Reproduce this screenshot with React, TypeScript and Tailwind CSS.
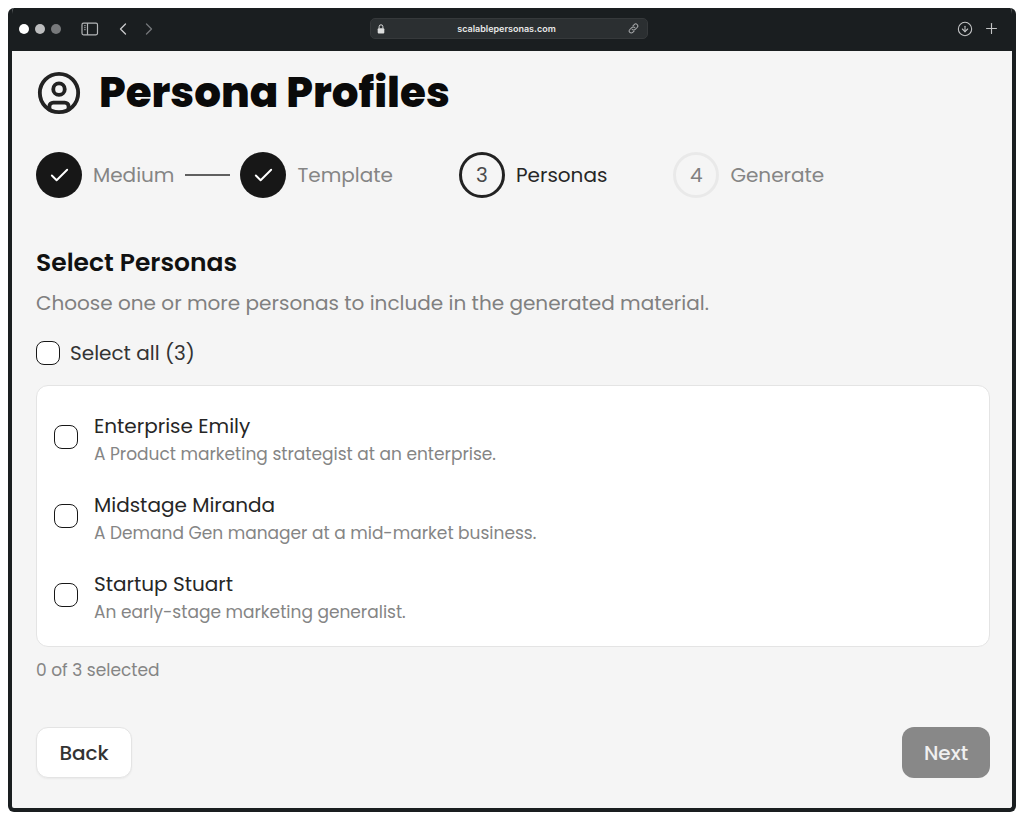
import { useState } from 'react';
import {
  Check,
  ChevronLeft,
  ChevronRight,
  CircleArrowDown,
  CircleUser,
  Plus,
} from 'lucide-react';
import clsx from 'clsx';

type StepState = 'done' | 'current' | 'upcoming';

const STEPS: { label: string; state: StepState }[] = [
  { label: 'Medium', state: 'done' },
  { label: 'Template', state: 'done' },
  { label: 'Personas', state: 'current' },
  { label: 'Generate', state: 'upcoming' },
];

const PERSONAS = [
  {
    id: 'emily',
    name: 'Enterprise Emily',
    description: 'A Product marketing strategist at an enterprise.',
  },
  {
    id: 'miranda',
    name: 'Midstage Miranda',
    description: 'A Demand Gen manager at a mid-market business.',
  },
  {
    id: 'stuart',
    name: 'Startup Stuart',
    description: 'An early-stage marketing generalist.',
  },
];

const CHECKBOX =
  'size-6 shrink-0 appearance-none rounded-lg border border-[#171717] bg-white checked:bg-[#171717]';

/* ── Browser chrome ─────────────────────────────────────── */

function SidebarIcon() {
  return (
    <svg width="18" height="14" viewBox="0 0 18 14" fill="none" stroke="#b4b6b8">
      <rect x="1" y="1.2" width="15.5" height="11.6" rx="1.5" strokeWidth="1.2" />
      <path d="M6.5 1.2v11.6" strokeWidth="1.2" />
      <path d="M3 3.7h1.8M3 5.7h1.8M3 7.7h1.8" strokeWidth="0.8" />
    </svg>
  );
}

function LockIcon() {
  return (
    <svg width="8" height="10" viewBox="0 0 8 10" fill="none">
      <rect x="0.7" y="4.2" width="6.6" height="5.4" rx="1" fill="#dcdddd" />
      <path d="M2.1 4.5V2.7a1.9 1.9 0 0 1 3.8 0v1.8" stroke="#dcdddd" strokeWidth="1" />
    </svg>
  );
}

function LinkIcon() {
  return (
    <svg
      width="11"
      height="11"
      viewBox="0 0 24 24"
      fill="none"
      stroke="#a4a6a8"
      strokeWidth="2.2"
      strokeLinecap="round"
    >
      <path d="M9 13.5a4.5 4.5 0 0 0 6.8.5l4.2-4.2a4.5 4.5 0 0 0-6.4-6.4L10.8 6.2" />
      <path d="M15 10.5a4.5 4.5 0 0 0-6.8-.5L4 14.2a4.5 4.5 0 0 0 6.4 6.4l2.8-2.8" />
    </svg>
  );
}

function BrowserBar() {
  return (
    <header className="grid h-[43px] grid-cols-[1fr_278px_1fr] items-center bg-[#1a1e20] pb-0.5 pl-1.5 pr-3">
      <div className="flex items-center pl-px">
        <div className="flex gap-1.5">
          <span className="size-2.5 rounded-full bg-white" />
          <span className="size-2.5 rounded-full bg-[#bcbdbe]" />
          <span className="size-2.5 rounded-full bg-[#77797b]" />
        </div>
        <button type="button" aria-label="Toggle sidebar" className="ml-5">
          <SidebarIcon />
        </button>
        <button type="button" aria-label="Go back" className="ml-3.5">
          <ChevronLeft size={20} strokeWidth={1.6} className="text-[#c8c9ca]" />
        </button>
        <button type="button" aria-label="Go forward" className="ml-1.5">
          <ChevronRight size={20} strokeWidth={1.6} className="text-[#737678]" />
        </button>
      </div>

      <div className="flex h-[21px] items-center justify-between rounded-[5px] border border-[#36393b] bg-[#2b2f31] pl-1.5 pr-2">
        <LockIcon />
        <a
          href="#"
          className="font-['Inter',sans-serif] text-[9px] font-semibold leading-4 text-[#e8e8e8]"
        >
          scalablepersonas.com
        </a>
        <LinkIcon />
      </div>

      <div className="flex items-center justify-end gap-2.5">
        <button type="button" aria-label="Downloads">
          <CircleArrowDown size={16} strokeWidth={1.6} className="text-[#c3c4c5]" />
        </button>
        <button type="button" aria-label="New tab">
          <Plus size={17} strokeWidth={1.6} className="text-[#c3c4c5]" />
        </button>
      </div>
    </header>
  );
}

/* ── Wizard steps ───────────────────────────────────────── */

function Stepper() {
  return (
    <ol className="mt-9 flex items-center gap-2.5">
      {STEPS.map((step, i) => (
        <li key={step.label} className="flex items-center gap-[11px]">
          <span
            className={clsx(
              'flex size-[46px] shrink-0 items-center justify-center rounded-full text-xl',
              step.state === 'done' && 'bg-[#171717] text-white',
              step.state === 'current' && 'border-[3px] border-[#222] text-[#4a4a4a]',
              step.state === 'upcoming' && 'border-[3px] border-[#e9e9e9] text-[#808080]',
            )}
          >
            {step.state === 'done' ? <Check size={23} strokeWidth={2} /> : i + 1}
          </span>
          <span
            className={clsx(
              'whitespace-nowrap text-xl leading-7',
              step.state === 'current' ? 'text-[#262626]' : 'text-[#858585]',
            )}
          >
            {step.label}
          </span>
          {i < STEPS.length - 1 && (
            <span className={clsx('h-0.5 w-[45px]', i === 0 && 'bg-[#606060]')} />
          )}
        </li>
      ))}
    </ol>
  );
}

export default function App() {
  const [selected, setSelected] = useState<string[]>([]);
  const allSelected = selected.length === PERSONAS.length;

  const toggle = (id: string) =>
    setSelected((prev) => (prev.includes(id) ? prev.filter((p) => p !== id) : [...prev, id]));

  return (
    <div className="min-h-screen bg-white p-2 font-['Poppins','Inter',sans-serif]">
      <div className="overflow-hidden rounded-md border-4 border-t-0 border-[#1a1e20] bg-[#f5f5f5]">
        <BrowserBar />

        <main className="pb-[30px] pl-6 pr-[22px] pt-[19px]">
          <div className="flex items-center gap-[17px]">
            <CircleUser size={46} strokeWidth={2} className="text-[#222]" />
            <h1 className="text-[42px] font-extrabold leading-[46px] text-[#0a0a0a]">
              Persona Profiles
            </h1>
          </div>

          <Stepper />

          <h2 className="mt-[49px] text-[25px] font-semibold leading-8 text-[#111]">
            Select Personas
          </h2>
          <p className="mt-2 text-xl leading-8 text-[#808080]">
            Choose one or more personas to include in the generated material.
          </p>

          <label className="mt-[18px] flex w-fit items-center gap-2.5 text-xl leading-8 text-[#333]">
            <input
              type="checkbox"
              className={CHECKBOX}
              checked={allSelected}
              onChange={() => setSelected(allSelected ? [] : PERSONAS.map((p) => p.id))}
            />
            Select all ({PERSONAS.length})
          </label>

          <ul className="mt-4 flex flex-col gap-[23px] rounded-xl border border-[#e4e4e4] bg-white px-[17px] pb-5 pt-[26px]">
            {PERSONAS.map((persona) => (
              <li key={persona.id}>
                <label className="flex items-start gap-4">
                  <input
                    type="checkbox"
                    className={clsx(CHECKBOX, 'mt-[13px]')}
                    checked={selected.includes(persona.id)}
                    onChange={() => toggle(persona.id)}
                  />
                  <span>
                    <span className="block text-xl leading-7 text-[#262626]">{persona.name}</span>
                    <span className="block text-[17px] leading-7 text-[#858585]">
                      {persona.description}
                    </span>
                  </span>
                </label>
              </li>
            ))}
          </ul>

          <p className="mt-[9px] text-[17px] leading-7 text-[#858585]">
            {selected.length} of {PERSONAS.length} selected
          </p>

          <div className="mt-[43px] flex items-center justify-between">
            <button
              type="button"
              className="h-[51px] w-24 rounded-xl border border-[#e4e4e4] bg-white text-xl font-medium text-[#333] shadow-xs"
            >
              Back
            </button>
            <button
              type="button"
              className="h-[51px] w-22 rounded-xl bg-[#888] text-xl font-medium text-[#f0f0f0]"
            >
              Next
            </button>
          </div>
        </main>
      </div>
    </div>
  );
}
